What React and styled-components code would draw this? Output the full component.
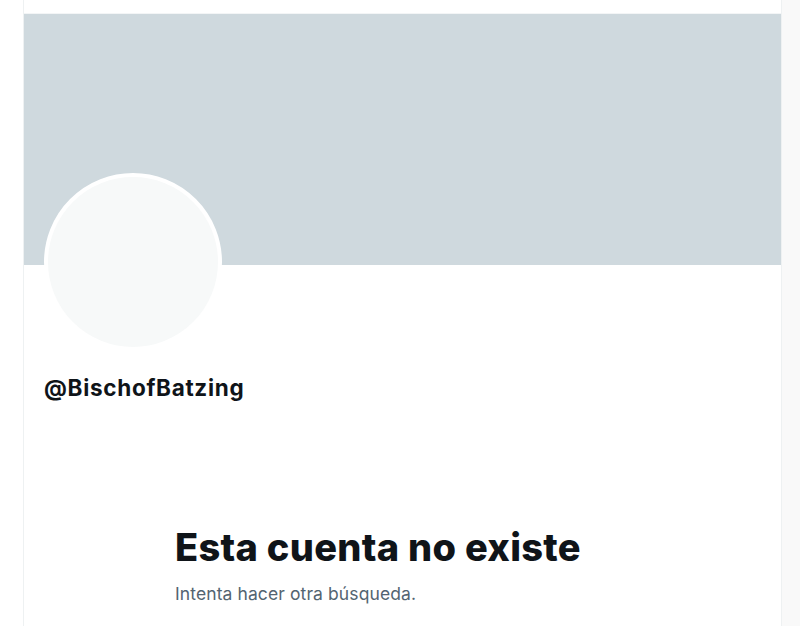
import React from "react";
import styled, { createGlobalStyle } from "styled-components";

const Global = createGlobalStyle`
  html, body { margin: 0; padding: 0; background: #ffffff; }
  body { font-family: Inter, "Liberation Sans", Arial, sans-serif; }
`;

const Page = styled.div`
  display: flex;
  min-height: 626px;
  background: linear-gradient(to right, #ffffff 0, #ffffff 782px, #f9f9f9 782px);
`;

const Column = styled.main`
  margin-left: 23px;
  width: 757px;
  min-height: 626px;
  background: #ffffff;
  border-left: 1px solid #eef1f2;
  border-right: 1px solid #eef1f2;
  display: flex;
  flex-direction: column;
`;

const TopBar = styled.div`
  height: 14px;
  border-bottom: 1px solid #f3f5f6;
  box-sizing: border-box;
`;

const Banner = styled.div`
  height: 251px;
  background: #cfd9de;
`;

const Profile = styled.section`
  padding: 0 0 0 20px;
  display: flex;
  flex-direction: column;
`;

const Avatar = styled.div`
  width: 178px;
  height: 178px;
  margin-top: -92px;
  border-radius: 50%;
  background: #f7f9f9;
  border: 4px solid #ffffff;
  box-sizing: border-box;
`;

const Handle = styled.div`
  margin-top: 24px;
  font-family: Inter, "Liberation Sans", Arial, sans-serif;
  font-weight: 700;
  font-size: 22.5px;
  line-height: 26px;
  letter-spacing: 0.7px;
  color: #0f1419;
`;

const Empty = styled.section`
  margin-top: 125px;
  padding-left: 151px;
  display: flex;
  flex-direction: column;
  gap: 16px;
`;

const Title = styled.h1`
  margin: 0;
  font-family: Inter, "Liberation Sans", Arial, sans-serif;
  font-weight: 800;
  font-size: 38px;
  line-height: 42px;
  letter-spacing: 0.3px;
  color: #0f1419;
`;

const Sub = styled.p`
  margin: 0;
  font-family: Inter, "Liberation Sans", Arial, sans-serif;
  font-size: 17.5px;
  line-height: 20px;
  letter-spacing: 0.1px;
  color: #536471;
`;

export default function App() {
  return (
    <>
      <Global />
      <Page>
        <Column>
          <TopBar />
          <Banner />
          <Profile>
            <Avatar />
            <Handle>@BischofBatzing</Handle>
          </Profile>
          <Empty>
            <Title>Esta cuenta no existe</Title>
            <Sub>Intenta hacer otra búsqueda.</Sub>
          </Empty>
        </Column>
      </Page>
    </>
  );
}
